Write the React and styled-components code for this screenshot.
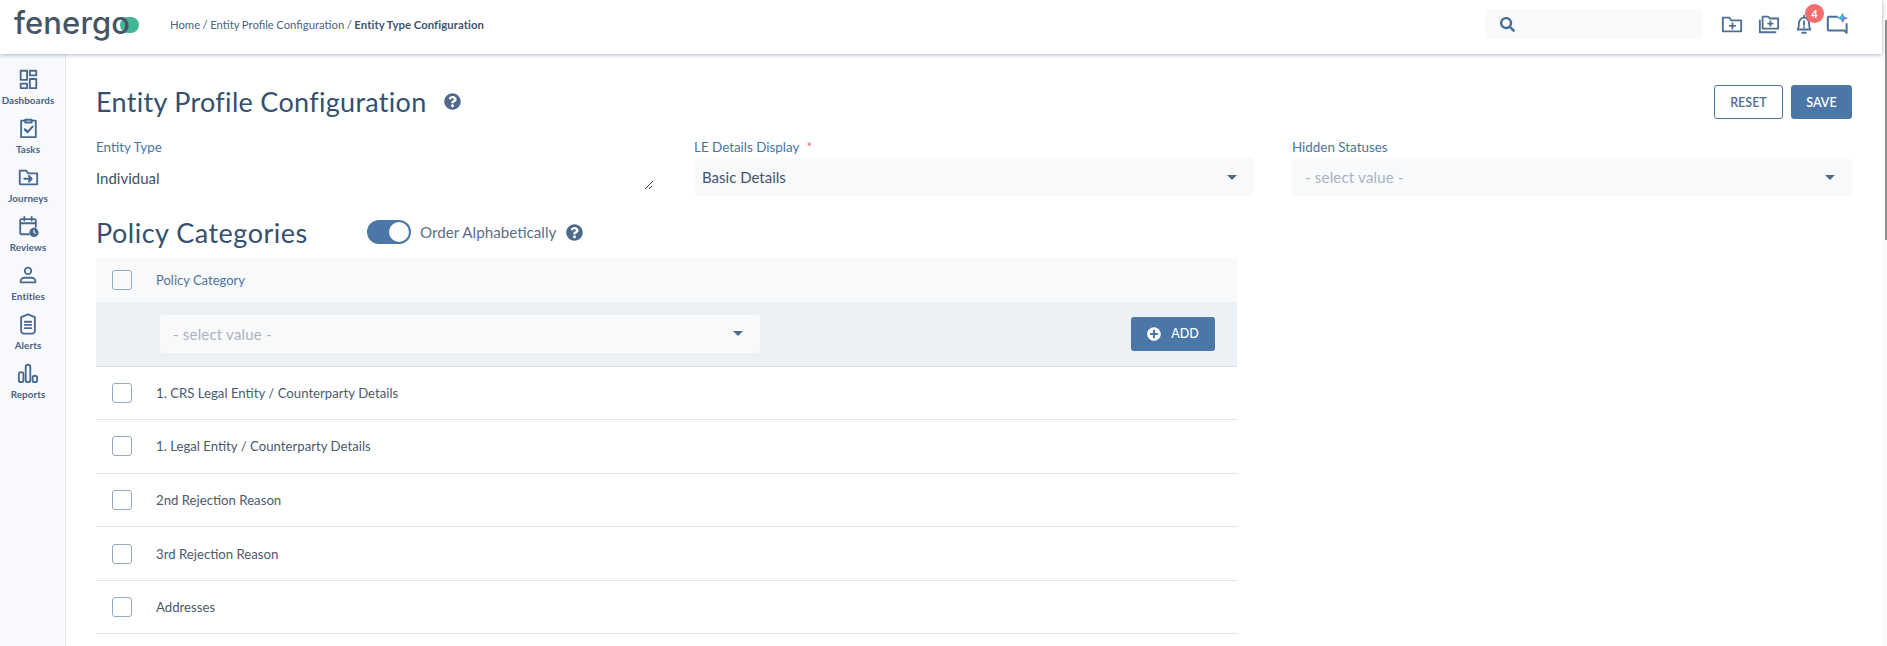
import React from "react";
import styled, { createGlobalStyle } from "styled-components";
import { FaSearch, FaQuestionCircle, FaPlusCircle } from "react-icons/fa";

const GlobalStyle = createGlobalStyle`
  html, body {
    margin: 0;
    padding: 0;
    background: #fff;
    overflow: hidden;
  }
  body {
    font-family: "Lato", "Noto Sans", sans-serif;
    color: #3e4f63;
  }
`;

const Page = styled.div`
  width: 1887px;
  height: 646px;
  display: flex;
  overflow: hidden;
`;

const Content = styled.div`
  flex: 1;
  min-width: 0;
  display: flex;
  flex-direction: column;
`;

const ScrollTrack = styled.div`
  width: 5px;
  flex: none;
  background: #fbfbfb;
  &::before {
    content: "";
    display: block;
    width: 2px;
    height: 220px;
    margin: 20px 0 0 3px;
    background: #8f8f8f;
  }
`;

const Header = styled.header`
  height: 54px;
  flex: none;
  box-sizing: border-box;
  display: flex;
  align-items: center;
  background: #fff;
  box-shadow: 0 1px 4px rgba(70, 100, 140, 0.45);
  padding: 0 34px 6px 14px;
  position: relative;
  z-index: 2;
`;

const Logo = styled.div`
  display: flex;
  align-items: center;
  width: 156px;
  position: relative;
`;

const LogoText = styled.span`
  font-family: "Inter", sans-serif;
  font-size: 31px;
  font-weight: 500;
  letter-spacing: 0.1px;
  line-height: 1;
  color: #465566;
  position: relative;
  top: -2px;
  z-index: 1;
`;

const LogoPill = styled.span`
  position: absolute;
  left: 106px;
  top: 8px;
  width: 19px;
  height: 16px;
  border-radius: 8px;
  background: #43b696;
`;

const Crumbs = styled.div`
  font-size: 11.3px;
  word-spacing: -0.4px;
  color: #4a6583;
  flex: 1;
  b {
    font-weight: 700;
    letter-spacing: 0.1px;
    color: #3e5572;
  }
`;

const Search = styled.div`
  width: 217px;
  height: 30px;
  border-radius: 4px;
  background: #f8f9fb;
  display: flex;
  align-items: center;
  padding-left: 15px;
  box-sizing: border-box;
  color: #4a6f97;
  font-size: 15px;
  margin-right: 19px;
`;

const HeaderIcons = styled.div`
  display: flex;
  align-items: center;
  gap: 13px;
  color: #4d6f96;
  svg:first-child {
    margin-right: 2px;
  }
`;

const ChatIcon = styled.svg`
  margin-left: -4px;
`;

const BellWrap = styled.div`
  position: relative;
  display: flex;
`;

const Badge = styled.span`
  position: absolute;
  top: -9px;
  left: 12px;
  width: 19px;
  height: 19px;
  border-radius: 50%;
  background: #f26d6d;
  color: #fff;
  font-size: 11px;
  font-weight: 700;
  display: flex;
  align-items: center;
  justify-content: center;
`;

const Body = styled.div`
  flex: 1;
  display: flex;
  min-height: 0;
`;

const Sidebar = styled.nav`
  width: 66px;
  flex: none;
  box-sizing: border-box;
  background: #f8f9fc;
  border-right: 1px solid #e3e7ee;
  padding: 14px 9px 0 0;
  display: flex;
  flex-direction: column;
  align-items: center;
`;

const NavItem = styled.div`
  height: 49px;
  display: flex;
  flex-direction: column;
  align-items: center;
  color: #48698f;
  font-size: 9.8px;
  font-weight: 700;
  letter-spacing: 0.1px;
  span {
    margin-top: 4px;
    color: #4a6180;
  }
`;

const Main = styled.main`
  flex: 1;
  min-width: 0;
  padding: 27px 30px 0;
`;

const TitleRow = styled.div`
  display: flex;
  align-items: center;
  height: 40px;
`;

const Title = styled.h1`
  margin: 0;
  font-size: 27px;
  font-weight: 400;
  letter-spacing: 0.3px;
  color: #34506f;
`;

const Help = styled.span`
  display: inline-flex;
  color: #4d6a8d;
  font-size: 17px;
  margin-left: ${(props) => props.$left || 0}px;
`;

const Actions = styled.div`
  margin: 2px 0 0 auto;
  display: flex;
  gap: 8px;
`;

const Button = styled.button`
  height: 34px;
  border-radius: 3px;
  box-sizing: border-box;
  border: 1px solid #4a76a8;
  background: ${(props) => (props.$primary ? "#4a76a8" : "#fff")};
  color: ${(props) => (props.$primary ? "#fff" : "#4a6f9a")};
  font-family: inherit;
  font-size: 12.5px;
  font-weight: 600;
  width: ${(props) => props.$width}px;
  padding: 0;
`;

const Fields = styled.div`
  display: grid;
  grid-template-columns: repeat(3, 560px);
  column-gap: 38px;
  margin-top: 16px;
`;

const Field = styled.div`
  display: flex;
  flex-direction: column;
  position: relative;
`;

const Label = styled.label`
  font-size: 13.4px;
  color: #4a74a5;
  height: 21px;
  line-height: 20px;
  em {
    color: #f26d6d;
    font-style: normal;
    margin-left: 4px;
  }
`;

const ReadOnly = styled.div`
  font-size: 15px;
  color: #3e4f63;
  height: 38px;
  line-height: 40px;
`;

const Resize = styled.svg`
  position: absolute;
  right: 2px;
  bottom: 6px;
`;

const Select = styled.div`
  height: 38px;
  display: flex;
  align-items: center;
  justify-content: space-between;
  box-sizing: border-box;
  padding: 0 17px 0 ${(props) => props.$padLeft || 8}px;
  background: #f8f9fb;
  border-radius: 4px;
  font-size: 15px;
  letter-spacing: ${(props) => (props.$empty ? "0.2px" : "0")};
  color: ${(props) => (props.$empty ? "#a9b3bf" : "#3e5572")};
  width: ${(props) => (props.$width ? `${props.$width}px` : "auto")};
`;

const Caret = styled.i`
  width: 0;
  height: 0;
  border-left: 5px solid transparent;
  border-right: 5px solid transparent;
  border-top: 5.5px solid #4d6a8d;
`;

const SectionRow = styled.div`
  display: flex;
  align-items: center;
  height: 40px;
  margin-top: 16px;
`;

const SectionTitle = styled.h2`
  margin: 0;
  width: 271px;
  font-size: 27px;
  font-weight: 400;
  letter-spacing: 0.5px;
  color: #34506f;
`;

const Toggle = styled.span`
  width: 44px;
  height: 24px;
  border-radius: 12px;
  background: #4a76a8;
  position: relative;
  flex: none;
  &::after {
    content: "";
    position: absolute;
    right: 2px;
    top: 2px;
    width: 20px;
    height: 20px;
    border-radius: 50%;
    background: #fff;
  }
`;

const ToggleText = styled.span`
  font-size: 15.2px;
  color: #5a6f88;
  margin: 0 10px 0 9px;
`;

const Table = styled.div`
  width: 1141px;
  margin-top: 6px;
`;

const HeadRow = styled.div`
  height: 43.5px;
  background: #f8f9fb;
  display: flex;
  align-items: center;
  padding-left: 16px;
  font-size: 13px;
  color: #4a74a5;
`;

const AddRow = styled.div`
  height: 65px;
  box-sizing: border-box;
  background: #ecf1f5;
  border-bottom: 1px solid #e0e4ea;
  display: flex;
  align-items: center;
  justify-content: space-between;
  padding: 0 22px 0 64px;
`;

const AddButton = styled.button`
  width: 84px;
  height: 34px;
  border: 0;
  border-radius: 3px;
  background: #4a76a8;
  color: #fff;
  font-family: inherit;
  font-size: 12.5px;
  font-weight: 500;
  display: flex;
  align-items: center;
  justify-content: center;
  gap: 10px;
  padding: 0;
`;

const Row = styled.div`
  height: 53.6px;
  box-sizing: border-box;
  border-bottom: 1px solid #e2e5e9;
  display: flex;
  align-items: center;
  padding-left: 16px;
  font-size: 13.2px;
  color: #4b5a6b;
`;

const Check = styled.span`
  width: 18px;
  height: 18px;
  flex: none;
  border: 1.5px solid #93a9c4;
  border-radius: 3px;
  margin-right: 24px;
`;

const outline = {
  fill: "none",
  stroke: "currentColor",
  strokeWidth: 2,
  strokeLinecap: "round",
  strokeLinejoin: "round",
};

const navItems = [
  {
    label: "Dashboards",
    icon: (
      <>
        <rect x="4" y="3" width="7" height="10" />
        <rect x="14" y="3" width="7" height="5" />
        <rect x="4" y="17" width="7" height="5" />
        <rect x="14" y="12" width="7" height="10" />
      </>
    ),
  },
  {
    label: "Tasks",
    icon: (
      <>
        <path d="M9 4H4.5v18h16V4H16" />
        <path d="M9 3h7v3H9z" />
        <path d="m8.5 13.5 3 3 5.5-6" strokeWidth="2.4" />
      </>
    ),
  },
  {
    label: "Journeys",
    icon: (
      <>
        <path d="M3 19V5h7l2 3h10v12H4a1 1 0 0 1-1-1z" />
        <path d="M8 14h8m-3-3 3 3-3 3" strokeWidth="2.2" />
      </>
    ),
  },
  {
    label: "Reviews",
    icon: (
      <>
        <path d="M13 21H5a1.5 1.5 0 0 1-1.5-1.5V6A1.5 1.5 0 0 1 5 4.5h14A1.5 1.5 0 0 1 20.5 6v7" />
        <path d="M4 9h16M8 2v4M16 2v4" />
        <circle cx="18.5" cy="19" r="5" fill="currentColor" stroke="none" />
        <path d="M18.5 16.5V19l1.5 1" stroke="#fff" strokeWidth="1.2" />
      </>
    ),
  },
  {
    label: "Entities",
    icon: (
      <>
        <circle cx="12" cy="7.5" r="3.5" />
        <path d="M4 20v-1.5c0-2 2-3.5 4-3.5h8c2 0 4 1.5 4 3.5V20z" />
      </>
    ),
  },
  {
    label: "Alerts",
    icon: (
      <>
        <path d="M12 1.5 19.5 4.5v15c0 1.5-1.5 3-3 3h-9c-1.5 0-3-1.5-3-3v-15z" />
        <path d="M8.5 9.5h7M8.5 13h7M8.5 16.5h7" />
      </>
    ),
  },
  {
    label: "Reports",
    icon: (
      <>
        <rect x="2" y="11" width="5" height="11" rx="2.5" />
        <rect x="9.5" y="3" width="5" height="19" rx="2.5" />
        <rect x="17" y="15" width="5" height="7" rx="2.5" />
      </>
    ),
  },
];

const rows = [
  "1. CRS Legal Entity / Counterparty Details",
  "1. Legal Entity / Counterparty Details",
  "2nd Rejection Reason",
  "3rd Rejection Reason",
  "Addresses",
];

function App() {
  return (
    <Page>
      <GlobalStyle />
      <Content>
        <Header>
          <Logo>
            <LogoPill />
            <LogoText>fenergo</LogoText>
          </Logo>
          <Crumbs>
            Home / Entity Profile Configuration / <b>Entity Type Configuration</b>
          </Crumbs>
          <Search>
            <FaSearch />
          </Search>
          <HeaderIcons>
            <svg width="22" height="22" viewBox="0 0 24 24" {...outline}>
              <path d="M2 20V5h7l2 3h11v12z" />
              <path d="M12.5 11v6M9.5 14h6" />
            </svg>
            <svg width="22" height="22" viewBox="0 0 24 24" {...outline}>
              <path d="M5 17V4h6l2 2h9v11z" />
              <path d="M2 8v13h17" />
              <path d="M13.5 9v5M11 11.5h5" />
            </svg>
            <BellWrap>
              <svg width="22" height="22" viewBox="0 0 24 24" {...outline}>
                <path d="M5 18c1.5-2 1.5-4 1.5-7 0-3 2.5-6 5.5-6s5.5 3 5.5 6c0 3 0 5 1.5 7z" />
                <path d="M12 3v2M10 21.5h4M12 9v4M12 15.5v.2" />
              </svg>
              <Badge>4</Badge>
            </BellWrap>
            <ChatIcon width="22" height="22" viewBox="0 0 24 24" {...outline} strokeWidth="2.2">
              <path d="M12 4H3a1 1 0 0 0-1 1v13a1 1 0 0 0 1 1h17l2.5 2.5V12" />
              <path d="M18 0 20.2 3.800 24 5.500 20.2 7.200 18 11 15.800 7.200 12 5.500 15.800 3.800z" fill="#5f9fe6" stroke="none" />
              <path d="M18 5.500h6L20.200 7.200 18 11z" fill="#a56ee6" stroke="none" />
              <path d="M18 0v5.500h-6L15.800 3.800z" fill="#2fc0dc" stroke="none" />
            </ChatIcon>
          </HeaderIcons>
        </Header>
        <Body>
          <Sidebar>
            {navItems.map((item) => (
              <NavItem key={item.label}>
                <svg width="22" height="22" viewBox="0 0 24 24" {...outline}>
                  {item.icon}
                </svg>
                <span>{item.label}</span>
              </NavItem>
            ))}
          </Sidebar>
          <Main>
            <TitleRow>
              <Title>Entity Profile Configuration</Title>
              <Help $left={17}>
                <FaQuestionCircle />
              </Help>
              <Actions>
                <Button $width={69}>RESET</Button>
                <Button $primary $width={61}>
                  SAVE
                </Button>
              </Actions>
            </TitleRow>
            <Fields>
              <Field>
                <Label>Entity Type</Label>
                <ReadOnly>Individual</ReadOnly>
                <Resize width="10" height="10" viewBox="0 0 10 10">
                  <path d="M1 9 9 1M5 9l3-3" stroke="#444" strokeWidth="1" fill="none" />
                </Resize>
              </Field>
              <Field>
                <Label>
                  LE Details Display <em>*</em>
                </Label>
                <Select>
                  Basic Details
                  <Caret />
                </Select>
              </Field>
              <Field>
                <Label>Hidden Statuses</Label>
                <Select $empty $padLeft={13}>
                  - select value -
                  <Caret />
                </Select>
              </Field>
            </Fields>
            <SectionRow>
              <SectionTitle>Policy Categories</SectionTitle>
              <Toggle />
              <ToggleText>Order Alphabetically</ToggleText>
              <Help>
                <FaQuestionCircle />
              </Help>
            </SectionRow>
            <Table>
              <HeadRow>
                <Check />
                Policy Category
              </HeadRow>
              <AddRow>
                <Select $empty $width={600} $padLeft={13}>
                  - select value -
                  <Caret />
                </Select>
                <AddButton>
                  <FaPlusCircle size={14} />
                  ADD
                </AddButton>
              </AddRow>
              {rows.map((text) => (
                <Row key={text}>
                  <Check />
                  {text}
                </Row>
              ))}
            </Table>
          </Main>
        </Body>
      </Content>
      <ScrollTrack />
    </Page>
  );
}

export default App;
